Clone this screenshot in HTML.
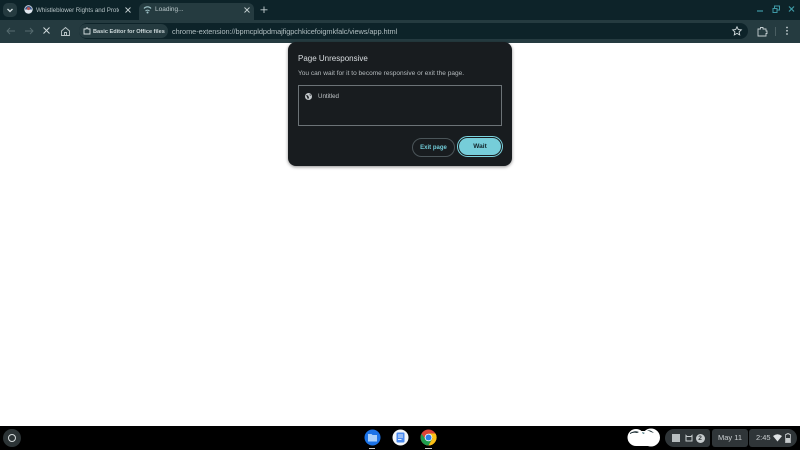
<!DOCTYPE html>
<html>
<head>
<meta charset="utf-8">
<style>
html,body{margin:0;padding:0;width:800px;height:450px;overflow:hidden;background:#fff;font-family:"Liberation Sans",sans-serif}
#w{position:absolute;left:0;top:0;width:800px;height:450px;filter:blur(.35px)}
.a{position:absolute;white-space:nowrap}
svg{position:absolute;overflow:visible}
</style>
</head>
<body>
<div id="w">
<div class="a" style="left:0;top:0;width:800px;height:20px;background:#0d2329"></div>
<div class="a" style="left:0;top:20px;width:800px;height:23px;background:#253b40"></div>
<div class="a" style="left:3px;top:3px;width:14px;height:14px;border-radius:5px;background:#253b40"></div>
<svg style="left:0;top:0" width="20" height="20"><path d="M7.500 9l2.500 2.500 2.500-2.500" fill="none" stroke="#d5e0e2" stroke-width="1.300"/></svg>
<svg style="left:24px;top:5px" width="9" height="9"><circle cx="4.500" cy="4.500" r="4.200" fill="#dfe6ee"/><path d="M1 4.500a3.500 3.500 0 0 1 7 0z" fill="#3b5a8c"/><circle cx="4.500" cy="3.600" r="1.500" fill="#b9504f"/></svg>
<div class="a" style="left:36px;top:6px;width:83px;overflow:hidden;font-size:6.200px;line-height:10px;letter-spacing:-.03px;color:#b5c2c5">Whistleblower Rights and Prote</div>
<svg style="left:124px;top:6px" width="8" height="8"><path d="M1.500 1.500l5 5M6.500 1.500l-5 5" stroke="#c4cfd1" stroke-width=".9"/></svg>
<div class="a" style="left:139px;top:3px;width:115px;height:17px;background:#253b40;border-radius:6px 6px 0 0"></div>
<svg style="left:143px;top:5px" width="9" height="9"><path d="M1 3.500a4.500 4.500 0 0 1 7 0M2.500 6a3 3 0 0 1 4 0" fill="none" stroke="#9fc3c8" stroke-width="1.100"/><circle cx="4.500" cy="7.500" r="1" fill="#9fc3c8"/></svg>
<div class="a" style="left:155px;top:5px;font-size:6.500px;line-height:10px;color:#b9c6c9">Loading...</div>
<svg style="left:243px;top:6px" width="8" height="8"><path d="M1.500 1.500l5 5M6.500 1.500l-5 5" stroke="#c4cfd1" stroke-width=".9"/></svg>
<svg style="left:259px;top:5px" width="10" height="10"><path d="M5 1.500v6.500M1.500 4.800h7" stroke="#c4cfd1" stroke-width=".9"/></svg>
<svg style="left:756px;top:4px" width="44" height="14" fill="none" stroke="#3f9aa6" stroke-width="1.200"><path d="M1 7h6"/><path d="M18.500 4.500v-2.500h5v4h-2M17 4.500h4v4h-4z" stroke-width="1"/><path d="M33 2.500l5 5M38 2.500l-5 5"/></svg>

<svg style="left:5px;top:25px" width="12" height="12" fill="none" stroke="#566b6f" stroke-width=".9"><path d="M10 6H2M5 3L2 6l3 3"/></svg>
<svg style="left:23px;top:25px" width="12" height="12" fill="none" stroke="#566b6f" stroke-width=".9"><path d="M2 6h8M7 3l3 3-3 3"/></svg>
<svg style="left:42px;top:26px" width="10" height="10" fill="none" stroke="#d0dadc" stroke-width="1"><path d="M1.500 1.500l6 6M7.500 1.500l-6 6"/></svg>
<svg style="left:60px;top:25.500px" width="11" height="11" fill="none" stroke="#bcc7c9" stroke-width=".9"><path d="M1.500 5L5.500 1.500 9.500 5v4.500h-8zM4.500 9.500V6.500h2v3"/></svg>
<div class="a" style="left:79px;top:23px;width:669px;height:16px;border-radius:8px;background:#0d2329"></div>
<div class="a" style="left:79px;top:24px;width:89px;height:14px;border-radius:7px;background:#253b40"></div>
<svg style="left:83px;top:27px" width="8" height="8" fill="none" stroke="#d5dfe1" stroke-width=".9"><path d="M1 2h2l.5-1h1l.5 1h2v5H1z"/></svg>
<div class="a" style="left:93px;top:26.500px;font-size:5.600px;line-height:10px;font-weight:bold;color:#cdd8da">Basic Editor for Office files</div>
<div class="a" style="left:172px;top:26px;font-size:7.400px;line-height:11px;color:#b0bdc0;letter-spacing:-.01em">chrome-extension://bpmcpldpdmajfigpchkicefoigmkfalc/views/app.html</div>
<svg style="left:732px;top:26px" width="10" height="10" fill="none" stroke="#d3dcde" stroke-width=".9"><path d="M5 .8l1.300 2.800 3 .3-2.200 2 .6 3L5 7.400 2.300 8.900l.6-3-2.200-2 3-.3z"/></svg>
<svg style="left:757px;top:25.500px" width="11" height="11" fill="none" stroke="#c6d0d2" stroke-width=".9"><path d="M1 3h2.500V1.500h2.500V3H9v2h1v2.500H9V10H1z"/></svg>
<div class="a" style="left:775px;top:27px;width:1px;height:9px;background:#4a5e62"></div>
<svg style="left:785px;top:26px" width="4" height="10" fill="#c6d0d2"><circle cx="2" cy="1.500" r=".9"/><circle cx="2" cy="4.800" r=".9"/><circle cx="2" cy="8" r=".9"/></svg>

<div class="a" style="left:288px;top:42px;width:224px;height:124px;border-radius:8px;background:#181c1f;box-shadow:0 1px 3px rgba(0,0,0,.45)"></div>
<div class="a" style="left:298px;top:53px;font-size:8px;line-height:12px;color:#d9dde0">Page Unresponsive</div>
<div class="a" style="left:298px;top:68.500px;font-size:6.550px;line-height:10px;color:#b4babd">You can wait for it to become responsive or exit the page.</div>
<div class="a" style="left:298px;top:85px;width:202px;height:39px;border:1px solid #6c7377"></div>
<svg style="left:305px;top:93px" width="7" height="7"><circle cx="3.500" cy="3.500" r="3.500" fill="#c3c8cb"/><path d="M1 2l2 .5 1 2-1 2L2 4zM4.500 1l1.500 1-1 1z" fill="#181c1f"/></svg>
<div class="a" style="left:318px;top:91.500px;font-size:6.200px;line-height:10px;color:#c0c5c8">Untitled</div>
<div class="a" style="left:412px;top:138px;width:41px;height:17px;border:1px solid #4b5559;border-radius:10px;text-align:center;font-size:6px;line-height:18px;font-weight:bold;color:#71cbd7">Exit page</div>
<div class="a" style="left:457px;top:136px;width:46px;height:21px;border:1px solid #7bd3de;border-radius:12px;box-sizing:border-box"></div>
<div class="a" style="left:459px;top:138px;width:42px;height:17px;border-radius:9px;background:#76cdd9;text-align:center;font-size:6.500px;line-height:18px;font-weight:bold;color:#12262b">Wait</div>

<div class="a" style="left:0;top:426px;width:800px;height:24px;background:#000"></div>
<div class="a" style="left:3px;top:429px;width:18px;height:18px;border-radius:50%;background:#2c3436"></div>
<div class="a" style="left:8px;top:434px;width:6px;height:6px;border:1.200px solid #d6dcdd;border-radius:50%"></div>

<svg style="left:364px;top:429px" width="17" height="17"><circle cx="8.500" cy="8.500" r="8" fill="#1b73e8"/><path d="M4 5h3.500l1 1H13v6.500H4z" fill="#a9d0fb"/></svg>
<div class="a" style="left:369px;top:448px;width:6px;height:1px;background:#c8c8c8"></div>
<svg style="left:392px;top:429px" width="17" height="17"><circle cx="8.500" cy="8.500" r="8" fill="#f4f6f8"/><rect x="4.500" y="3.500" width="8" height="10" rx="1" fill="#4a8af0"/><path d="M6 6h5M6 8h5M6 10.500h3.500" stroke="#e3eefc" stroke-width=".9"/></svg>
<svg style="left:420px;top:429px" width="17" height="17"><circle cx="8.500" cy="8.500" r="8" fill="#dc4337"/><path d="M1.500 4.700A8 8 0 0 0 8.500 16.500L12.500 9.500H5z" fill="#1e9c4d"/><path d="M8.500 4.500h7A8 8 0 0 1 8.500 16.500L12.500 9.500z" fill="#fbc116"/><circle cx="8.500" cy="8.500" r="3.800" fill="#fff"/><circle cx="8.500" cy="8.500" r="3" fill="#2a7de8"/></svg>
<div class="a" style="left:425px;top:448px;width:7px;height:1px;background:#c8c8c8"></div>

<svg style="left:627px;top:428px" width="34" height="19"><circle cx="9" cy="9.500" r="8.500" fill="#fff"/><circle cx="24" cy="9.500" r="9" fill="#fff"/><rect x="9" y="3" width="16" height="15" fill="#fff"/><path d="M3 5q5-3 9-1l-2 1q-4-1-7 1zM20 2q4 0 7 3l-3-1z" fill="#16292f"/><path d="M15 4l3 1-2 1z" fill="#3c6f7a"/></svg>
<div class="a" style="left:665px;top:429px;width:45px;height:18px;border-radius:9px 3px 3px 9px;background:#2f3538"></div>
<div class="a" style="left:672px;top:434px;width:8px;height:8px;background:#b7bdbf"></div>
<svg style="left:685px;top:434px" width="8" height="8" fill="none" stroke="#c6cbcd" stroke-width="1"><path d="M1 1.500l1 1h4l1-1v5.500H1z"/></svg>
<div class="a" style="left:695.500px;top:433.500px;width:9px;height:9px;border-radius:50%;background:#c6cbcd;text-align:center;font-size:6.500px;line-height:9px;font-weight:bold;color:#2f3538">2</div>
<div class="a" style="left:712px;top:429px;width:36px;height:18px;border-radius:3px;background:#2f3538;text-align:center;font-size:7.500px;line-height:18px;color:#c9ced0">May 11</div>
<div class="a" style="left:749px;top:429px;width:48px;height:18px;border-radius:3px 9px 9px 3px;background:#2f3538"></div>
<div class="a" style="left:756px;top:429px;font-size:7.500px;line-height:18px;color:#c9ced0">2:45</div>
<svg style="left:773px;top:434px" width="9" height="8"><path d="M0 2Q4.500-1.500 9 2L4.500 7.500z" fill="#dfe3e5"/></svg>
<svg style="left:785px;top:433px" width="6" height="10"><path d="M2 .5h2v1h1.500v8h-5v-8H2z" fill="none" stroke="#c6cbcd" stroke-width=".8"/><rect x="1" y="5" width="4" height="4.500" fill="#c6cbcd"/></svg>
</div>
</body>
</html>
